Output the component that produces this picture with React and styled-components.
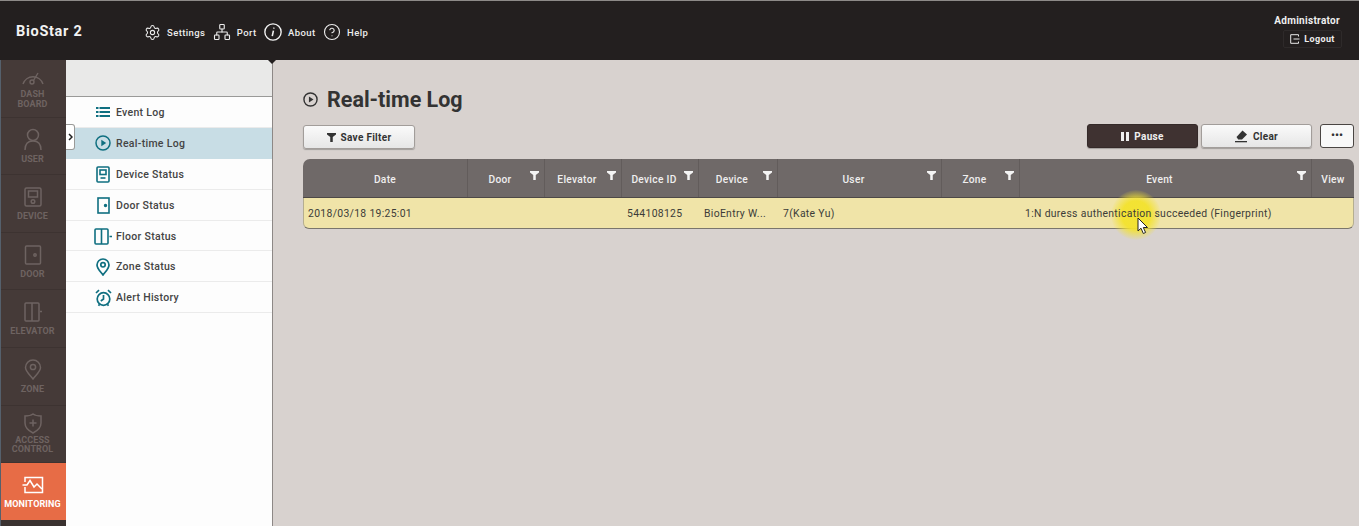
import React from 'react'
import styled, { createGlobalStyle } from 'styled-components'
import { Settings, Network, CircleHelp } from 'lucide-react'

const GlobalStyle = createGlobalStyle`
  html, body { margin: 0; padding: 0; height: 100%; overflow: hidden; }
  body { font-family: Roboto, "Liberation Sans", sans-serif; background: #d8d2cf; }
  * { box-sizing: border-box; }
`

const COLUMNS = '165px 77px 77px 77px 79px 164px 78px 292px 42px'
const TEAL = '#0f6f80'

// side nav drawings
const Dash = () => (
  <svg width="24" height="20" viewBox="0 0 24 20" fill="none" stroke="currentColor" strokeWidth="1.4">
    <path d="M2 16 A10.5 10.5 0 0 1 22 16" />
    <circle cx="11" cy="14" r="2" />
    <path d="M12.5 12.5 L17 5" />
  </svg>
)
const User = () => (
  <svg width="20" height="24" viewBox="0 0 20 24" fill="none" stroke="currentColor" strokeWidth="1.5">
    <circle cx="10" cy="7" r="5.5" />
    <path d="M2 22 C2 15 6 13 10 13 C14 13 18 15 18 22" />
  </svg>
)
const Device = () => (
  <svg width="18" height="20" viewBox="0 0 18 20" fill="none" stroke="currentColor" strokeWidth="1.5">
    <rect x="1" y="1" width="16" height="18" rx="1.5" />
    <rect x="4.5" y="4" width="9" height="6" />
    <circle cx="9" cy="14.5" r="1.8" />
  </svg>
)
const Door = () => (
  <svg width="18" height="20" viewBox="0 0 18 20" fill="none" stroke="currentColor" strokeWidth="1.5">
    <rect x="1.5" y="1" width="15" height="18" rx="1" />
    <circle cx="11" cy="10" r="1.2" />
  </svg>
)
const Elevator = () => (
  <svg width="18" height="20" viewBox="0 0 18 20" fill="none" stroke="currentColor" strokeWidth="1.5">
    <rect x="1" y="1" width="14" height="18" rx="1" />
    <path d="M8 1 V19 M16 9.5 H18" />
  </svg>
)
const Pin = () => (
  <svg width="18" height="21" viewBox="0 0 18 21" fill="none" stroke="currentColor" strokeWidth="1.5">
    <path d="M9 20 C5 15 1.5 12 1.5 8.5 A7.5 7.5 0 0 1 16.5 8.5 C16.5 12 13 15 9 20 Z" />
    <circle cx="9" cy="8" r="2.6" />
  </svg>
)
const Shield = () => (
  <svg width="18" height="21" viewBox="0 0 18 21" fill="none" stroke="currentColor" strokeWidth="1.5">
    <path d="M9 1 C11 2.5 14 3 17 3 V10 C17 15 13 18 9 20 C5 18 1 15 1 10 V3 C4 3 7 2.5 9 1 Z" />
    <path d="M9 6.5 V13.5 M5.5 10 H12.5" />
  </svg>
)
const Monitor = () => (
  <svg width="22" height="18" viewBox="0 0 22 18" fill="none" stroke="currentColor" strokeWidth="1.5">
    <path d="M3 6 V1.5 H20.5 V16.5 H3 V11" />
    <path d="M0.5 9 H5 L8 4.5 L12 11 L15 8 L20 13" />
  </svg>
)

// sub menu drawings
const ListGlyph = () => (
  <svg width="14" height="10" viewBox="0 0 14 10" fill={TEAL}>
    <rect x="0" y="0" width="2.5" height="2" /><rect x="3.5" y="0" width="10.5" height="2" />
    <rect x="0" y="4" width="2.5" height="2" /><rect x="3.5" y="4" width="10.5" height="2" />
    <rect x="0" y="8" width="2.5" height="2" /><rect x="3.5" y="8" width="10.5" height="2" />
  </svg>
)
const PlayCircle = ({ size = 16, color = TEAL }) => (
  <svg width={size} height={size} viewBox="0 0 16 16" fill="none" stroke={color} strokeWidth="1.5">
    <circle cx="8" cy="8" r="7" />
    <path d="M6.3 4.8 L11.2 8 L6.3 11.2 Z" fill={color} stroke="none" />
  </svg>
)
const DeviceGlyph = () => (
  <svg width="14" height="17" viewBox="0 0 14 17" fill="none" stroke={TEAL} strokeWidth="1.6">
    <rect x="1" y="1" width="12" height="15" rx="1" />
    <rect x="4" y="4" width="6" height="4.5" />
    <path d="M4.5 12 H9.5" />
  </svg>
)
const DoorGlyph = () => (
  <svg width="13" height="17" viewBox="0 0 13 17" fill="none" stroke={TEAL} strokeWidth="1.6">
    <rect x="1" y="1" width="11" height="15" />
    <circle cx="8.5" cy="8.5" r="0.9" fill={TEAL} />
  </svg>
)
const FloorGlyph = () => (
  <svg width="18" height="17" viewBox="0 0 18 17" fill="none" stroke={TEAL} strokeWidth="1.6">
    <rect x="1" y="1" width="13" height="15" rx="1" />
    <path d="M7.5 1 V16 M15.5 8.5 H18" />
  </svg>
)
const PinGlyph = () => (
  <svg width="14" height="18" viewBox="0 0 14 18" fill="none" stroke={TEAL} strokeWidth="1.7">
    <path d="M7 17 C4 13 1 10.5 1 7 A6 6 0 0 1 13 7 C13 10.5 10 13 7 17 Z" />
    <circle cx="7" cy="6.8" r="2.2" />
  </svg>
)
const AlarmGlyph = () => (
  <svg width="17" height="18" viewBox="0 0 17 18" fill="none" stroke={TEAL} strokeWidth="1.7">
    <circle cx="8.5" cy="10" r="6.3" />
    <path d="M8.5 6 V10 L5.8 12" />
    <path d="M1 4 L4 1.2 M16 4 L13 1.2 M3.5 16.8 L4.6 15.2 M13.5 16.8 L12.4 15.2" />
  </svg>
)

// top bar and toolbar drawings
const InfoItalic = () => (
  <svg width="18" height="18" viewBox="0 0 17 17" fill="none" stroke="#f2f2f2" strokeWidth="1.3">
    <circle cx="8.5" cy="8.5" r="7.7" />
    <path d="M9.4 4.4 L9.2 5.4 M8.9 7.2 L7.8 12.4" strokeWidth="1.5" />
  </svg>
)
const LogoutGlyph = () => (
  <svg width="10" height="10" viewBox="0 0 10 10" fill="none" stroke="#e8e8e8" strokeWidth="1">
    <path d="M8.5 2.5 V0.7 H0.7 V9.3 H8.5 V7.5 M3.5 5 H9.5" />
  </svg>
)
const Funnel = ({ color = '#333', size = 9 }) => (
  <svg width={size} height={size} viewBox="0 0 10 10" fill={color}>
    <path d="M0 0 H10 V1.8 L6.4 4.4 V10 H3.6 V4.4 L0 1.8 Z" />
  </svg>
)
const Eraser = () => (
  <svg width="13" height="13" viewBox="0 0 13 13" fill="#333">
    <path d="M7.5 0.5 L12 4.5 L7 9.5 L3.2 9.5 L1.5 7 Z" />
    <rect x="0" y="11" width="12" height="1.3" />
  </svg>
)
const Pointer = () => (
  <svg width="13" height="18" viewBox="0 0 13 18">
    <path d="M1 1 V14 L4 11.2 L6.3 16.5 L8.6 15.5 L6.3 10.5 H10.5 Z" fill="#fff" stroke="#222" strokeWidth="1" />
  </svg>
)

const sideItems = [
  { label: ['DASH', 'BOARD'], Icon: Dash },
  { label: ['USER'], Icon: User },
  { label: ['DEVICE'], Icon: Device },
  { label: ['DOOR'], Icon: Door },
  { label: ['ELEVATOR'], Icon: Elevator },
  { label: ['ZONE'], Icon: Pin },
  { label: ['ACCESS', 'CONTROL'], Icon: Shield },
  { label: ['MONITORING'], Icon: Monitor, active: true },
]

const subItems = [
  { label: 'Event Log', Icon: ListGlyph },
  { label: 'Real-time Log', Icon: PlayCircle, active: true },
  { label: 'Device Status', Icon: DeviceGlyph },
  { label: 'Door Status', Icon: DoorGlyph },
  { label: 'Floor Status', Icon: FloorGlyph },
  { label: 'Zone Status', Icon: PinGlyph },
  { label: 'Alert History', Icon: AlarmGlyph },
]

const headCols = [
  { label: 'Date' },
  { label: 'Door', filter: true },
  { label: 'Elevator', filter: true },
  { label: 'Device ID', filter: true },
  { label: 'Device', filter: true },
  { label: 'User', filter: true },
  { label: 'Zone', filter: true },
  { label: 'Event', filter: true },
  { label: 'View' },
]

const rowCells = [
  '2018/03/18 19:25:01', '', '', '544108125', 'BioEntry W...', '7(Kate Yu)', '',
  '1:N duress authentication succeeded (Fingerprint)', '',
]

const App = () => {
  return (
    <Page>
      <GlobalStyle />
      <TopBar>
        <Brand>BioStar 2</Brand>
        <TopNav>
          <TopLink><Settings size={17} strokeWidth={1.5} /><span>Settings</span></TopLink>
          <TopLink><Network size={18} strokeWidth={1.5} /><span>Port</span></TopLink>
          <TopLink><InfoItalic /><span>About</span></TopLink>
          <TopLink><CircleHelp size={18} strokeWidth={1.5} /><span>Help</span></TopLink>
        </TopNav>
        <Account>
          <AccountName>Administrator</AccountName>
          <Logout><LogoutGlyph />Logout</Logout>
        </Account>
      </TopBar>
      <Body>
        <SideNav>
          {sideItems.map(({ label, Icon, active }) => (
            <SideItem key={label[0]} $active={active} $double={label.length > 1}>
              <SideIcon><Icon /></SideIcon>
              <SideLabel>{label.map((l) => <span key={l}>{l}</span>)}</SideLabel>
            </SideItem>
          ))}
        </SideNav>
        <SubPanel>
          <SubHead />
          <Toggle>
            <svg width="5" height="8" viewBox="0 0 5 8" fill="none" stroke="#222" strokeWidth="1.5">
              <path d="M1 1 L4 4 L1 7" />
            </svg>
          </Toggle>
          {subItems.map(({ label, Icon, active }) => (
            <SubItem key={label} $active={active}>
              <SubIcon><Icon /></SubIcon>
              {label}
            </SubItem>
          ))}
        </SubPanel>
        <Main>
          <TitleRow>
            <PlayCircle size={15} color="#333" />
            <Title>Real-time Log</Title>
          </TitleRow>
          <Toolbar>
            <SaveButton $width={112}><Funnel />Save Filter</SaveButton>
            <ToolbarRight>
              <Button $width={111} $dark><PauseBars />Pause</Button>
              <Button $width={111}><Eraser />Clear</Button>
              <MoreButton>•••</MoreButton>
            </ToolbarRight>
          </Toolbar>
          <Table>
            <HeadRow>
              {headCols.map(({ label, filter }) => (
                <HeadCell key={label} $filter={filter}>
                  <HeadLabel>{label}</HeadLabel>
                  {filter && <HeadFilter><Funnel color="#f4f4f4" /></HeadFilter>}
                </HeadCell>
              ))}
            </HeadRow>
            <DataRow>
              <Highlight />
              {rowCells.map((text, i) => <DataCell key={i}>{text}</DataCell>)}
              <CursorMark><Pointer /></CursorMark>
            </DataRow>
          </Table>
        </Main>
      </Body>
    </Page>
  )
}

const Page = styled.div`
  width: 100%;
  height: 100vh;
  display: flex;
  flex-direction: column;
  overflow: hidden;
`

const TopBar = styled.header`
  height: 60px;
  flex: none;
  display: flex;
  align-items: center;
  background: #231f1f;
  border-top: 1px solid #8d8a88;
  padding: 2px 17px 0 16px;
  color: #eee;
  position: relative;
  &::after {
    content: '';
    position: absolute;
    left: 268px;
    bottom: -4px;
    border-left: 4px solid transparent;
    border-right: 4px solid transparent;
    border-top: 4px solid #231f1f;
    z-index: 3;
  }
`

const Brand = styled.div`
  width: 128px;
  font-size: 14.5px;
  font-weight: 700;
  letter-spacing: 0.7px;
  color: #f2f2f2;
`

const TopNav = styled.nav`
  display: flex;
  align-items: center;
  gap: 7.5px;
  flex: 1;
  margin-top: 1px;
`

const TopLink = styled.div`
  display: flex;
  align-items: center;
  gap: 6px;
  font-size: 9.5px;
  font-weight: 500;
  letter-spacing: 0.4px;
  color: #ececec;
`

const Account = styled.div`
  display: flex;
  flex-direction: column;
  align-items: flex-end;
  margin-top: -1px;
`

const AccountName = styled.div`
  font-size: 10px;
  font-weight: 700;
  letter-spacing: 0.3px;
  margin-right: 2px;
  color: #efefef;
`

const Logout = styled.div`
  width: 59px;
  height: 18px;
  margin-top: 4px;
  display: flex;
  align-items: center;
  justify-content: center;
  gap: 4px;
  font-size: 9px;
  font-weight: 700;
  letter-spacing: 0.4px;
  border: 1px solid #2e2a2a;
  border-radius: 2px;
`

const Body = styled.div`
  flex: 1;
  display: flex;
  min-height: 0;
`

const SideNav = styled.aside`
  width: 66px;
  flex: none;
  background: #3a3230;
  border-left: 1px solid #55606c;
`

const SideItem = styled.div`
  height: 57.6px;
  padding: ${(p) => (p.$double ? '6px' : '10px')} 2px 0 0;
  display: flex;
  flex-direction: column;
  align-items: center;
  gap: ${(p) => (p.$double ? '0' : '3px')};
  background: ${(p) => (p.$active ? '#e76c46' : '#453a38')};
  color: ${(p) => (p.$active ? '#fff' : '#6e6361')};
  border-bottom: 1px solid ${(p) => (p.$active ? '#3a3230' : '#3d3331')};
`

const SideIcon = styled.div`
  height: 24px;
  flex: none;
  display: flex;
  align-items: center;
  justify-content: center;
`

const SideLabel = styled.div`
  display: flex;
  flex-direction: column;
  align-items: center;
  font-size: 9px;
  line-height: 9.5px;
  font-weight: 700;
  letter-spacing: 0.1px;
`

const SubPanel = styled.section`
  width: 207px;
  flex: none;
  position: relative;
  background: #fdfdfd;
  border-right: 1px solid #8d8886;
`

const SubHead = styled.div`
  height: 37px;
  background: #e9e9e8;
  border-bottom: 1px solid #9a9a98;
`

const Toggle = styled.div`
  position: absolute;
  left: 0;
  top: 64px;
  width: 9px;
  height: 26px;
  display: flex;
  align-items: center;
  justify-content: center;
  background: #fff;
  border: 1px solid #9a9a98;
  border-left: none;
  border-radius: 0 3px 3px 0;
  z-index: 2;
`

const SubItem = styled.div`
  height: 30.9px;
  display: flex;
  align-items: center;
  padding: 1px 0 0 28px;
  font-size: 10.5px;
  font-weight: 500;
  letter-spacing: 0.3px;
  color: #444;
  background: ${(p) => (p.$active ? '#c8dde5' : 'transparent')};
  border-bottom: 1px solid ${(p) => (p.$active ? '#c8dde5' : '#ebebeb')};
`

const SubIcon = styled.span`
  width: 18px;
  margin-right: 4px;
  display: flex;
  justify-content: center;
  align-items: center;
`

const Main = styled.main`
  flex: 1;
  min-width: 0;
  padding: 27px 5px 0 30px;
  background: #d8d2cf;
`

const TitleRow = styled.div`
  height: 24px;
  display: flex;
  align-items: center;
  gap: 9px;
  color: #333;
`

const Title = styled.h1`
  margin: 0;
  font-size: 21.5px;
  font-weight: 700;
  color: #333;
`

const Toolbar = styled.div`
  display: flex;
  justify-content: space-between;
  align-items: flex-start;
  margin-top: 13px;
`

const ToolbarRight = styled.div`
  display: flex;
  gap: 3px;
`

const Button = styled.button`
  width: ${(p) => p.$width}px;
  height: 24px;
  padding: 0;
  display: flex;
  align-items: center;
  justify-content: center;
  gap: 5px;
  font-family: inherit;
  font-size: 10px;
  font-weight: 700;
  letter-spacing: 0.3px;
  border-radius: 3px;
  color: ${(p) => (p.$dark ? '#efefef' : '#333')};
  background: ${(p) => (p.$dark ? '#3f3231' : 'linear-gradient(#fafafa, #e6e6e6)')};
  border: 1px solid ${(p) => (p.$dark ? '#352a29' : '#a29d9a')};
  box-shadow: 0 1px 1px rgba(0, 0, 0, 0.25);
`

const SaveButton = styled(Button)`
  margin-top: 1px;
`

const PauseBars = styled.span`
  width: 8px;
  height: 9px;
  border-left: 3px solid #efefef;
  border-right: 3px solid #efefef;
`

const MoreButton = styled.button`
  width: 34px;
  height: 24px;
  margin-left: 5px;
  padding: 0 0 1px;
  font-family: inherit;
  font-size: 11px;
  font-weight: 700;
  letter-spacing: 0;
  color: #333;
  background: #f8f8f8;
  border: 1px solid #4a4543;
  border-radius: 3px;
`

const Table = styled.div`
  margin-top: 10px;
  width: 1051px;
`

const HeadRow = styled.div`
  display: grid;
  grid-template-columns: ${COLUMNS};
  height: 39px;
  background: #6f6968;
  border-radius: 7px 7px 0 0;
  border-bottom: 1px solid #4d4947;
`

const HeadCell = styled.div`
  display: flex;
  align-items: center;
  justify-content: center;
  border-right: 1px solid ${(p) => (p.$filter ? '#625c5b' : 'transparent')};
  &:first-child { border-right-color: #625c5b; }
  &:last-child { border-right: none; }
`

const HeadLabel = styled.span`
  flex: 1;
  text-align: center;
  font-size: 10.2px;
  font-weight: 500;
  letter-spacing: 0.3px;
  color: #efefef;
  margin-top: 2px;
`

const HeadFilter = styled.span`
  display: flex;
  width: 9px;
  margin-right: 5px;
  margin-left: -2px;
  margin-bottom: 5px;
`

const DataRow = styled.div`
  position: relative;
  display: grid;
  grid-template-columns: ${COLUMNS};
  height: 31px;
  align-items: center;
  background: #f0e4a8;
  border-radius: 0 0 6px 6px;
  border-bottom: 1px solid #7a766c;
  border-left: 1px solid #b5ae90;
  border-right: 1px solid #b5ae90;
`

const DataCell = styled.div`
  position: relative;
  padding-left: 4px;
  font-size: 10.4px;
  letter-spacing: 0.32px;
  color: #3c3c38;
  white-space: nowrap;
  overflow: hidden;
`

const Highlight = styled.div`
  position: absolute;
  left: 807px;
  top: -8px;
  width: 50px;
  height: 50px;
  border-radius: 50%;
  background: radial-gradient(circle, rgba(243, 226, 45, 0.95) 40%, rgba(243, 226, 45, 0) 72%);
  pointer-events: none;
`

const CursorMark = styled.div`
  position: absolute;
  left: 833px;
  top: 19px;
  display: flex;
`

export default App
